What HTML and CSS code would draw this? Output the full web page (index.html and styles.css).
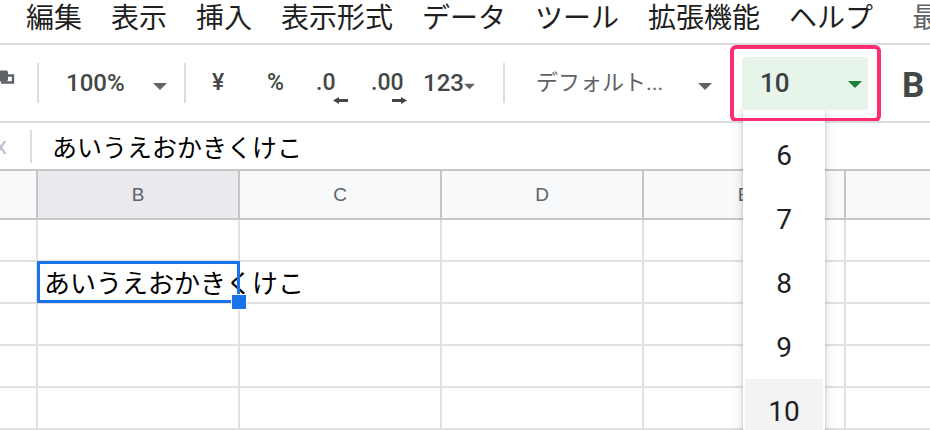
FILE: index.html
```html
<!DOCTYPE html>
<html lang="ja">
<head>
    <meta charset="UTF-8">
    <meta name="viewport" content="width=device-width, initial-scale=1.0">
    <title>スプレッドシート</title>
    <link rel="stylesheet" href="styles.css">
</head>
<body>
    <div class="menubar">
        <span>編集</span>
        <span>表示</span>
        <span>挿入</span>
        <span>表示形式</span>
        <span>データ</span>
        <span>ツール</span>
        <span>拡張機能</span>
        <span>ヘルプ</span>
        <span class="last-edit">最終編集: 数秒前</span>
    </div>

    <div class="toolbar">
        <svg class="tb-paint" width="16" height="40" viewBox="0 0 16 40">
            <rect x="-5" y="7.5" width="13" height="11" rx="2" fill="#5f6368"/>
            <path d="M8 12.5H13V19.5H1" fill="none" stroke="#5f6368" stroke-width="2.4"/>
        </svg>
        <span class="tb-sep sep-1"></span>
        <div class="tb-select tb-zoom">
            <span>100%</span>
            <svg class="caret" width="14" height="7" viewBox="0 0 14 7"><path d="M0 0H14L7 7Z"/></svg>
        </div>
        <span class="tb-sep sep-2"></span>
        <span class="tb-btn tb-yen">¥</span>
        <span class="tb-btn tb-pct">%</span>
        <span class="tb-btn tb-dec dec-less">
            <span>.0</span>
            <svg width="16" height="7" viewBox="0 0 16 7"><path d="M0 3.5L6 0V2H15V5H6V7Z"/></svg>
        </span>
        <span class="tb-btn tb-dec dec-more">
            <span>.00</span>
            <svg width="16" height="7" viewBox="0 0 16 7"><path d="M15 3.5L9 0V2H0V5H9V7Z"/></svg>
        </span>
        <div class="tb-select tb-format">
            <span>123</span>
            <svg class="caret" width="14" height="7" viewBox="0 0 14 7"><path d="M0 0H14L7 7Z"/></svg>
        </div>
        <span class="tb-sep sep-3"></span>
        <div class="tb-select tb-font">
            <span>デフォルト...</span>
            <svg class="caret" width="14" height="7" viewBox="0 0 14 7"><path d="M0 0H14L7 7Z"/></svg>
        </div>
        <div class="fontsize-frame">
            <div class="fontsize">
                <span>10</span>
                <svg class="caret" width="14" height="7" viewBox="0 0 14 7"><path d="M0 0H14L7 7Z"/></svg>
            </div>
        </div>
        <span class="tb-btn tb-bold">B</span>
    </div>

    <div class="formula-bar">
        <span class="fx">x</span>
        <span class="fx-sep"></span>
        <span class="fx-value">あいうえおかきくけこ</span>
    </div>

    <div class="grid">
        <div class="cell head corner"></div>
        <div class="cell head active">B</div>
        <div class="cell head">C</div>
        <div class="cell head">D</div>
        <div class="cell head">E</div>
        <div class="cell head last"></div>

        <div class="cell rowhead"></div>
        <div class="cell"></div>
        <div class="cell"></div>
        <div class="cell"></div>
        <div class="cell"></div>
        <div class="cell last"></div>

        <div class="cell rowhead"></div>
        <div class="cell selected"><span class="cell-text">あいうえおかきくけこ</span></div>
        <div class="cell"></div>
        <div class="cell"></div>
        <div class="cell"></div>
        <div class="cell last"></div>

        <div class="cell rowhead"></div>
        <div class="cell"></div>
        <div class="cell"></div>
        <div class="cell"></div>
        <div class="cell"></div>
        <div class="cell last"></div>

        <div class="cell rowhead"></div>
        <div class="cell"></div>
        <div class="cell"></div>
        <div class="cell"></div>
        <div class="cell"></div>
        <div class="cell last"></div>

        <div class="cell rowhead"></div>
        <div class="cell"></div>
        <div class="cell"></div>
        <div class="cell"></div>
        <div class="cell"></div>
        <div class="cell last"></div>
    </div>

    <div class="size-menu">
        <div class="size-opt">6</div>
        <div class="size-opt">7</div>
        <div class="size-opt">8</div>
        <div class="size-opt">9</div>
        <div class="size-opt current">10</div>
    </div>
</body>
</html>
```

FILE: styles.css
```css
* {
    box-sizing: border-box;
}

body {
    margin: 0;
    width: 930px;
    height: 430px;
    overflow: hidden;
    background: #fff;
    font-family: Roboto, "Noto Sans CJK JP", sans-serif;
}

/* menu bar */
.menubar {
    height: 45px;
    padding: 2px 0 0 26px;
    border-bottom: 2px solid #dadce0;
    display: flex;
    gap: 29px;
    font-family: "Noto Sans CJK JP", sans-serif;
    font-size: 28px;
    line-height: 28px;
    color: #1f1f1f;
    white-space: nowrap;
    overflow: hidden;
}

.last-edit {
    margin-left: 10px;
    color: #5f6368;
}

/* toolbar */
.toolbar {
    height: 78px;
    border-bottom: 2px solid #dadce0;
    display: flex;
    align-items: center;
    white-space: nowrap;
    overflow: hidden;
    color: #444746;
    font-size: 23px;
    font-weight: 500;
    line-height: 24px;
}

.toolbar > * {
    flex-shrink: 0;
}

.tb-sep {
    width: 2px;
    height: 40px;
    background: #dadce0;
}

.sep-1 { margin-left: 21px; }
.sep-2 { margin-left: 17px; }
.sep-3 { margin-left: 28px; }

.tb-select {
    display: flex;
    align-items: center;
    justify-content: space-between;
}

.caret {
    fill: #5f6368;
    margin-top: 6px;
}

.tb-zoom {
    width: 101px;
    margin-left: 27px;
    font-size: 24px;
}

.tb-yen {
    width: 14px;
    margin-left: 26px;
}

.tb-pct {
    width: 20px;
    margin-left: 41px;
}

.tb-dec {
    display: flex;
    flex-direction: column;
    padding-top: 9px;
}

.tb-dec svg {
    margin-top: 2px;
    fill: #444746;
}

.dec-less {
    width: 34px;
    margin-left: 29px;
}

.dec-less svg {
    margin-left: 17px;
}

.dec-more {
    width: 38px;
    margin-left: 21px;
}

.dec-more svg {
    margin-left: 21px;
}

.tb-format {
    width: 52px;
    margin-left: 14px;
    font-size: 24px;
}

.tb-font {
    width: 176px;
    margin-left: 31px;
    font-size: 22px;
    font-weight: 400;
    color: #5f6368;
}

.fontsize-frame {
    position: relative;
    z-index: 3;
    width: 151px;
    height: 77px;
    margin-left: 18px;
    padding: 8px 9px 8px 8px;
    border: 4px solid #ff2d6e;
    border-radius: 6px;
}

.fontsize {
    height: 53px;
    padding: 0 6px 0 18px;
    background: #e6f4ea;
    border-radius: 4px;
    display: flex;
    align-items: center;
    justify-content: space-between;
    font-size: 26px;
    color: #3c4043;
}

.fontsize .caret {
    fill: #188038;
    margin-top: 3px;
}

.tb-bold {
    margin-left: 21px;
    margin-top: 5px;
    font-size: 35px;
    font-weight: 700;
    line-height: 34px;
}

/* formula bar */
.formula-bar {
    height: 48px;
    border-bottom: 2px solid #c7c7c7;
    display: flex;
    align-items: center;
    white-space: nowrap;
}

.fx {
    width: 13px;
    margin-left: -5px;
    font-size: 24px;
    color: #bdc1c6;
}

.fx-sep {
    width: 2px;
    height: 33px;
    margin-left: 22px;
    background: #dadce0;
}

.fx-value {
    margin-left: 20px;
    font-family: "Noto Sans CJK JP", sans-serif;
    font-size: 25px;
    line-height: 30px;
    color: #000;
}

/* grid */
.grid {
    display: grid;
    grid-template-columns: 38px 202px 202px 202px 202px 84px;
    grid-template-rows: 49px repeat(5, 42px);
}

.cell {
    border-right: 2px solid #e1e1e1;
    border-bottom: 2px solid #e1e1e1;
}

.cell.last {
    border-right: none;
}

.head {
    background: #f8f9fa;
    border-color: #c4c7c5;
    display: flex;
    align-items: center;
    justify-content: center;
    font-family: "Liberation Sans", Arial, sans-serif;
    font-size: 19px;
    color: #5f6368;
}

.head.active {
    background: #e8eaed;
}

.selected {
    position: relative;
    display: flex;
    align-items: center;
    padding-left: 6px;
    white-space: nowrap;
    overflow: visible;
}

.cell-text {
    font-family: "Noto Sans CJK JP", sans-serif;
    font-size: 26px;
    line-height: 30px;
    color: #000;
}

.selected::before {
    content: "";
    position: absolute;
    top: -1px;
    left: -1px;
    right: -2px;
    bottom: -1px;
    border: 3px solid #1a73e8;
}

.selected::after {
    content: "";
    position: absolute;
    left: 193px;
    top: 32px;
    width: 14px;
    height: 14px;
    background: #1a73e8;
    border: 1px solid #fff;
}

/* font size dropdown */
.size-menu {
    position: absolute;
    top: 110px;
    left: 743px;
    z-index: 2;
    width: 82px;
    height: 330px;
    padding-top: 13px;
    background: #fff;
    box-shadow: 0 1px 3px rgba(60, 64, 67, 0.25), 0 4px 8px 3px rgba(60, 64, 67, 0.12);
}

.size-opt {
    height: 64px;
    margin: 0 2px;
    display: flex;
    align-items: center;
    justify-content: center;
    font-size: 28px;
    color: #202124;
}

.size-opt.current {
    background: #f1f3f4;
}
```
